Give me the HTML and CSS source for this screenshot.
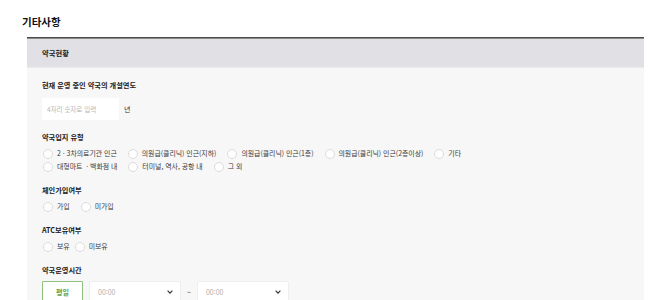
FILE: index.html
```html
<!DOCTYPE html>
<html lang="ko">
<head>
<meta charset="utf-8">
<title>기타사항</title>
<link rel="stylesheet" href="styles.css">
</head>
<body>
<div class="page">
  <h2 class="title">기타사항</h2>
  <section class="panel">
    <div class="panel-head">약국현황</div>
    <div class="panel-body">
      <div class="field">
        <div class="label label-input">현재 운영 중인 약국의 개설연도</div>
        <div class="inline">
          <div class="text-input">4자리 숫자로 입력</div>
          <span class="unit">년</span>
        </div>
      </div>

      <div class="field">
        <div class="label">약국입지 유형</div>
        <div class="opts opts-wide">
          <label class="opt"><span class="radio"></span>2 · 3차의료기관 인근</label>
          <label class="opt"><span class="radio"></span>의원급(클리닉) 인근(지하)</label>
          <label class="opt"><span class="radio"></span>의원급(클리닉) 인근(1층)</label>
          <label class="opt"><span class="radio"></span>의원급(클리닉) 인근(2층이상)</label>
          <label class="opt"><span class="radio"></span>기타</label>
        </div>
        <div class="opts opts-wide">
          <label class="opt"><span class="radio"></span>대형마트 &nbsp;· 백화점 내</label>
          <label class="opt"><span class="radio"></span>터미널, 역사, 공항 내</label>
          <label class="opt"><span class="radio"></span>그 외</label>
        </div>
      </div>

      <div class="field">
        <div class="label">체인가입여부</div>
        <div class="opts opts-wide">
          <label class="opt"><span class="radio"></span>가입</label>
          <label class="opt"><span class="radio"></span>미가입</label>
        </div>
      </div>

      <div class="field">
        <div class="label">ATC보유여부</div>
        <div class="opts opts-tight">
          <label class="opt"><span class="radio"></span>보유</label>
          <label class="opt"><span class="radio"></span>미보유</label>
        </div>
      </div>

      <div class="field">
        <div class="label label-time">약국운영시간</div>
        <div class="inline">
          <button class="day-btn">평일</button>
          <div class="select"><span>00:00</span>
            <svg class="chev" width="6" height="4" viewBox="0 0 6 4"><polyline points="0.6,0.6 3,3.2 5.4,0.6" fill="none" stroke="#333" stroke-width="1.1"/></svg>
          </div>
          <span class="tilde">~</span>
          <div class="select"><span>00:00</span>
            <svg class="chev" width="6" height="4" viewBox="0 0 6 4"><polyline points="0.6,0.6 3,3.2 5.4,0.6" fill="none" stroke="#333" stroke-width="1.1"/></svg>
          </div>
        </div>
      </div>
    </div>
  </section>
</div>
</body>
</html>
```

FILE: styles.css
```css
html, body {
  margin: 0;
  padding: 0;
  background: #ffffff;
}
body {
  font-family: "Noto Sans CJK KR", "Noto Sans", sans-serif;
  color: #222;
}
.page {
  padding: 15px 26px 0 27px;
}
.title {
  margin: 0 0 8px -5px;
  font-size: 10.5px;
  line-height: 14px;
  font-weight: 700;
  color: #111;
}
.panel {
  border-top: 1px solid #4b4b4b;
  background: #f7f7f7;
  height: 300px;
}
.panel-head {
  border-top: 1px solid #8a8a8a;
  background: #e1e0e5;
  height: 28px;
  line-height: 28px;
  padding-left: 15px;
  font-size: 7.3px;
  font-weight: 700;
  color: #222;
  border-bottom: 1px solid #eaeaea;
}
.panel-body {
  padding: 12px 15px 0 15px;
}
.field + .field {
  margin-top: 12px;
}
.label {
  font-size: 7.2px;
  line-height: 10px;
  font-weight: 700;
  color: #1a1a1a;
  margin-bottom: 5px;
}
.label-input {
  margin-bottom: 8px;
}
.label-time {
  margin-bottom: 6px;
}
.inline {
  display: flex;
  align-items: center;
}
.text-input {
  width: 77px;
  height: 22px;
  box-sizing: border-box;
  background: #fff;
  padding-left: 5px;
  font-size: 6.5px;
  line-height: 22px;
  color: #b5b5b5;
}
.unit {
  margin-left: 5px;
  font-size: 7px;
  color: #333;
}
.opts {
  display: flex;
  align-items: center;
  height: 13px;
}
.opts-wide .opt + .opt {
  margin-left: 10px;
}
.opts-tight .opt + .opt {
  margin-left: 4px;
}
.opt {
  display: flex;
  align-items: center;
  font-size: 6.9px;
  line-height: 13px;
  color: #3a3a3a;
  white-space: nowrap;
}
.radio {
  width: 10px;
  height: 10px;
  box-sizing: border-box;
  border: 1px solid #dcdcdc;
  border-radius: 50%;
  background: #fff;
  margin-left: 1px;
  margin-right: 4px;
}
.day-btn {
  width: 41px;
  height: 22px;
  box-sizing: border-box;
  border: 1px solid #8cc07c;
  background: #fff;
  border-radius: 1px;
  color: #56a042;
  font-family: inherit;
  font-size: 7px;
  font-weight: 700;
  padding: 0;
  margin-right: 6px;
}
.select {
  width: 92px;
  height: 22px;
  box-sizing: border-box;
  background: #fff;
  border: 1px solid #eeeeee;
  border-radius: 2px;
  display: flex;
  align-items: center;
  justify-content: space-between;
  padding: 0 7px 0 8px;
  font-size: 7px;
  color: #b0b0b0;
}
.tilde {
  font-size: 7px;
  color: #555;
  margin: 0 6px 0 6px;
}
```
